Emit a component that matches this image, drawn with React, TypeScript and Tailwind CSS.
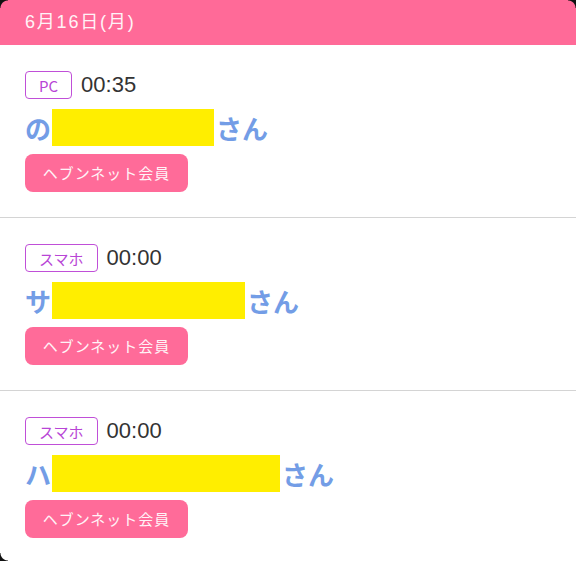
import React from 'react';

interface Entry {
  device: string;
  time: string;
  head: string;
  maskWidth: number;
}

const entries: Entry[] = [
  { device: 'PC', time: '00:35', head: 'の', maskWidth: 162 },
  { device: 'スマホ', time: '00:00', head: 'サ', maskWidth: 193 },
  { device: 'スマホ', time: '00:00', head: 'ハ', maskWidth: 228 },
];

function VisitRow({ entry, last }: { entry: Entry; last: boolean }) {
  return (
    <div className={`pl-[25px] pt-[26px] pb-[25px] ${last ? '' : 'border-b border-[#d4d4d4]'}`}>
      <div className="flex items-center gap-[9px] h-[28px]">
        <span className="h-[28px] px-[13px] flex items-center rounded-[4px] border-[1.5px] border-[#c04fd8] text-[15px] text-[#b845d6] leading-none">
          {entry.device}
        </span>
        <span className="text-[22px] text-[#333] leading-none font-['Liberation_Sans',sans-serif]">{entry.time}</span>
      </div>
      <div className="mt-[10px] flex items-center h-[37px] text-[26px] font-bold text-[#739de6] leading-none">
        <span>{entry.head}</span>
        <span className="h-[37px] bg-[#ffee00] ml-[1px] mr-[2px]" style={{ width: entry.maskWidth }} />
        <span>さん</span>
      </div>
      <button className="mt-[8px] w-[163px] h-[38px] rounded-[8px] bg-[#ff6b99] text-[#fff3f7] text-[15px] tracking-[1px] flex items-center justify-center">
        ヘブンネット会員
      </button>
    </div>
  );
}

export default function App() {
  return (
    <div
      className="relative w-[576px] h-[561px] bg-white overflow-hidden"
      style={{ fontFamily: '"Noto Sans CJK JP", "Noto Sans", sans-serif' }}
    >
      <div className="h-[45px] bg-[#ff6a98] pl-[25px] flex items-center text-[#fff3f7] text-[18px] tracking-[1.8px] font-['Liberation_Sans','Noto_Sans_CJK_JP',sans-serif]">
        6月16日(月)
      </div>
      {entries.map((e, i) => (
        <VisitRow key={i} entry={e} last={i === entries.length - 1} />
      ))}
      <div className="absolute top-0 left-0 w-[8px] h-[8px] bg-[radial-gradient(circle_at_100%_100%,transparent_7px,#111_8px)]" />
      <div className="absolute top-0 right-0 w-[8px] h-[8px] bg-[radial-gradient(circle_at_0%_100%,transparent_7px,#111_8px)]" />
      <div className="absolute bottom-0 left-0 w-[8px] h-[8px] bg-[radial-gradient(circle_at_100%_0%,transparent_7px,#111_8px)]" />
    </div>
  );
}
